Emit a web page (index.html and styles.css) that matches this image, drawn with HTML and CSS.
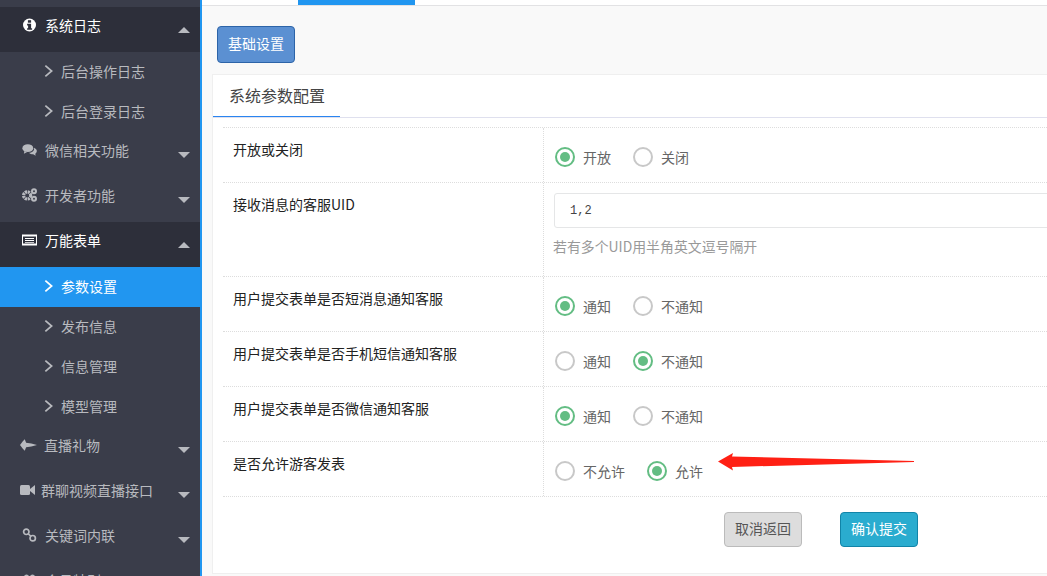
FILE: index.html
```html
<!DOCTYPE html>
<html lang="zh">
<head>
<meta charset="utf-8">
<title>系统参数配置</title>
<link rel="stylesheet" href="styles.css">
</head>
<body>
<div class="app">
  <aside class="sidebar">
    <div class="side-top"></div>
    <div class="menu open"><svg class="ico" viewBox="0 0 14 14"><circle cx="7" cy="7" r="6.500" fill="#fff"/><rect x="5.400" y="2.200" width="3.200" height="2.500" fill="#2d2f3a"/><path d="M4.600 5.800h4v4.400h1v1.600H4.600v-1.600h1V7.400h-1z" fill="#2d2f3a"/></svg><span class="label">系统日志</span><i class="caret up"></i></div>
    <div class="sub"><svg class="chev" viewBox="0 0 10 14"><path d="M1.500 1 8.500 7l-7 6" fill="none" stroke="currentColor" stroke-width="1.900"/></svg><span>后台操作日志</span></div>
    <div class="sub"><svg class="chev" viewBox="0 0 10 14"><path d="M1.500 1 8.500 7l-7 6" fill="none" stroke="currentColor" stroke-width="1.900"/></svg><span>后台登录日志</span></div>
    <div class="menu"><svg class="ico" viewBox="0 0 16 14"><ellipse cx="6.200" cy="5" rx="5.800" ry="4.200" fill="currentColor"/><path d="M2.500 8 2 11l3.500-2z" fill="currentColor"/><path d="M12.800 4.500c2 .8 3 2 3 3.600 0 1.200-.7 2.200-1.700 2.800l.5 2.100-2.700-1.600c-1.800 0-3.400-.5-4.400-1.600 3 0 6-1.800 5.300-5.300z" fill="currentColor"/></svg><span class="label">微信相关功能</span><i class="caret"></i></div>
    <div class="menu"><svg class="ico" viewBox="0 0 16 14"><circle cx="5.500" cy="7.500" r="3.800" fill="none" stroke="currentColor" stroke-width="3.400" stroke-dasharray="2.300 .7"/><circle cx="12.800" cy="3" r="2.100" fill="none" stroke="currentColor" stroke-width="2.200"/><circle cx="12.800" cy="11" r="2.100" fill="none" stroke="currentColor" stroke-width="2.200"/></svg><span class="label">开发者功能</span><i class="caret"></i></div>
    <div class="menu open"><svg class="ico" viewBox="0 0 15 12"><rect width="15" height="11" y=".5" fill="#fff"/><path d="M1 2.500h13v7H1z" fill="#2d2f3a"/><path d="M3 4h9v1H3zM3 6h9v1H3zM3 8h9v.8H3z" fill="#fff"/></svg><span class="label">万能表单</span><i class="caret up"></i></div>
    <div class="sub active"><svg class="chev" viewBox="0 0 10 14"><path d="M1.500 1 8.500 7l-7 6" fill="none" stroke="currentColor" stroke-width="1.900"/></svg><span>参数设置</span></div>
    <div class="sub"><svg class="chev" viewBox="0 0 10 14"><path d="M1.500 1 8.500 7l-7 6" fill="none" stroke="currentColor" stroke-width="1.900"/></svg><span>发布信息</span></div>
    <div class="sub"><svg class="chev" viewBox="0 0 10 14"><path d="M1.500 1 8.500 7l-7 6" fill="none" stroke="currentColor" stroke-width="1.900"/></svg><span>信息管理</span></div>
    <div class="sub"><svg class="chev" viewBox="0 0 10 14"><path d="M1.500 1 8.500 7l-7 6" fill="none" stroke="currentColor" stroke-width="1.900"/></svg><span>模型管理</span></div>
    <div class="menu gift"><svg class="ico wide" viewBox="0 0 18 12"><path d="M0 6 3 2l2-2 1.500 3.500L12 4.500 18 6l-6 1.500-5.500 1L5 12l-2-2z" fill="currentColor"/></svg><span class="label">直播礼物</span><i class="caret"></i></div>
    <div class="menu video"><svg class="ico" viewBox="0 0 15 11"><rect y=".5" width="10" height="10" rx="1.500" fill="currentColor"/><path d="m10 4.500 5-4v10l-5-4z" fill="currentColor"/></svg><span class="label">群聊视频直播接口</span><i class="caret"></i></div>
    <div class="menu"><svg class="ico" viewBox="0 0 14 14"><circle cx="3.800" cy="3.800" r="2.700" fill="none" stroke="currentColor" stroke-width="1.700"/><circle cx="10.200" cy="10.200" r="2.700" fill="none" stroke="currentColor" stroke-width="1.700"/><path d="m5.500 5.500 3 3" stroke="currentColor" stroke-width="1.700"/></svg><span class="label">关键词内联</span><i class="caret"></i></div>
    <div class="menu"><svg class="ico" viewBox="0 0 14 14"><circle cx="4" cy="4" r="2.500" fill="currentColor"/><circle cx="10" cy="4" r="2.500" fill="currentColor"/><rect x="1" y="7" width="12" height="6" rx="1.500" fill="currentColor"/></svg><span class="label">会员特别</span><i class="caret"></i></div>
  </aside>
  <main class="main">
    <div class="topbar"><span class="toptab"></span></div>
    <div class="toolbar"><button class="btn btn-primary" type="button">基础设置</button></div>
    <section class="panel">
      <div class="panel-head"><span class="panel-tab">系统参数配置</span></div>
      <div class="rows">
        <div class="row r55"><div class="name">开放或关闭</div><div class="val"><div class="radios"><span class="radio on"></span><span class="rtext">开放</span><span class="radio"></span><span class="rtext">关闭</span></div></div></div>
        <div class="row r94"><div class="name">接收消息的客服UID</div><div class="val stack"><div class="input">1,2</div><div class="hint">若有多个UID用半角英文逗号隔开</div></div></div>
        <div class="row r55"><div class="name">用户提交表单是否短消息通知客服</div><div class="val"><div class="radios"><span class="radio on"></span><span class="rtext">通知</span><span class="radio"></span><span class="rtext">不通知</span></div></div></div>
        <div class="row r55"><div class="name">用户提交表单是否手机短信通知客服</div><div class="val"><div class="radios"><span class="radio"></span><span class="rtext">通知</span><span class="radio on"></span><span class="rtext">不通知</span></div></div></div>
        <div class="row r55"><div class="name">用户提交表单是否微信通知客服</div><div class="val"><div class="radios"><span class="radio on"></span><span class="rtext">通知</span><span class="radio"></span><span class="rtext">不通知</span></div></div></div>
        <div class="row r55"><div class="name">是否允许游客发表</div><div class="val"><div class="radios"><span class="radio"></span><span class="rtext">不允许</span><span class="radio on"></span><span class="rtext">允许</span></div></div></div>
      </div>
      <div class="actions"><button class="btn btn-gray" type="button">取消返回</button><button class="btn btn-cyan" type="button">确认提交</button></div>
    </section>
    <svg class="arrow" viewBox="0 0 196 18"><path d="M0 8.500 15 0l-1 3.500L196 8v1L14 14l1 3.500z" fill="#ff2014"/></svg>
  </main>
</div>
</body>
</html>
```
FILE: styles.css
```css
* { box-sizing: border-box; }
html, body { margin: 0; height: 576px; overflow: hidden; }
body { font-family: "Noto Sans CJK SC", "Liberation Sans", sans-serif; font-size: 14px; color: #333; }
.app { display: flex; width: 1047px; height: 576px; overflow: hidden; }

.sidebar { flex: 0 0 202px; height: 576px; overflow: hidden; background: #3a3d4a; border-right: 2px solid #2196f0; color: #b8babf; }
.side-top { height: 7px; }
.menu { position: relative; display: flex; align-items: center; height: 45px; padding: 0 0 9px 22px; }
.menu.open { background: #2d2f3a; color: #fff; }
.ico { width: 15px; height: 14px; flex: none; }
.ico.wide { width: 17px; margin-left: -2px; }
.label { margin-left: 8px; line-height: 20px; }
.gift .label { margin-left: 7px; }
.video .label { margin-left: 6px; }
.video .ico { margin-left: -2px; }
.caret { position: absolute; left: 178px; top: 20px; width: 0; height: 0; border-left: 6px solid transparent; border-right: 6px solid transparent; border-top: 6px solid #b8babf; }
.caret.up { border-top: 0; border-bottom: 6px solid #b8babf; }
.sub { display: flex; align-items: center; height: 40px; padding: 0 0 2px 44px; }
.chev { width: 9px; height: 14px; flex: none; }
.sub span { margin-left: 8px; line-height: 20px; }
.sub.active { background: #2196f0; color: #fff; margin-right: -2px; position: relative; }

.main { position: relative; flex: 1; min-width: 0; height: 576px; overflow: hidden; background: #f9f9f9; }
.topbar { height: 6px; background: #fff; border-bottom: 1px solid #e2e2e4; padding-left: 96px; }
.toptab { display: block; width: 117px; height: 5px; background: #2196f0; }
.toolbar { padding: 20px 0 0 15px; height: 68px; }
.btn { padding: 0 0 3px; font: inherit; font-size: 14px; border-radius: 4px; border: 1px solid; width: 78px; height: 35px; }
.btn-primary { height: 37px; background: #5b90d2; border-color: #2d64a8; color: #fff; }
.panel { width: 900px; height: 500px; margin-left: 10px; background: #fff; border: 1px solid #efefef; }
.panel-head { height: 43px; border-bottom: 1px solid #dfe0ee; }
.panel-tab { display: block; width: 127px; height: 42px; line-height: 40px; padding-left: 16px; font-size: 16px; color: #444; border-bottom: 1px solid #2a85f0; }
.rows { margin: 9px 0 0 10px; border-top: 1px dotted #ddd; }
.row { display: flex; border-bottom: 1px dotted #ddd; color: #222; }
.r55 { height: 55px; }
.r94 { height: 94px; }
.name { flex: none; width: 321px; padding: 11px 0 0 10px; line-height: 20px; border-right: 1px dotted #ddd; }
.val { flex: 1; min-width: 0; padding: 0 0 0 11px; }
.radios { display: flex; align-items: center; padding-top: 19px; color: #666; }
.radio { position: relative; width: 20px; height: 20px; border: 2px solid #c8c8c8; border-radius: 50%; flex: none; }
.radio.on { border-color: #63bd83; }
.radio.on::after { content: ""; position: absolute; left: 3px; top: 3px; width: 10px; height: 10px; border-radius: 50%; background: #63bd83; }
.rtext { margin: 0 22px 0 8px; line-height: 20px; }
.stack { padding-top: 10px; }
.input { height: 35px; width: 600px; margin-left: -1px; padding-left: 15px; line-height: 34px; font-family: "Liberation Mono", monospace; font-size: 12px; color: #444; border: 1px solid #e5e6e7; border-radius: 3px; }
.hint { margin: 8px 0 0 -2px; line-height: 20px; font-size: 13.900px; color: #999; }
.actions { display: flex; padding: 15px 0 0 511px; gap: 38px; }
.btn-gray { background: #ddd; border-color: #bbb; color: #555; }
.btn-cyan { background: #2aaccf; border-color: #1184a8; color: #fff; }
.arrow { position: absolute; left: 516px; top: 453px; width: 196px; height: 18px; }
```
